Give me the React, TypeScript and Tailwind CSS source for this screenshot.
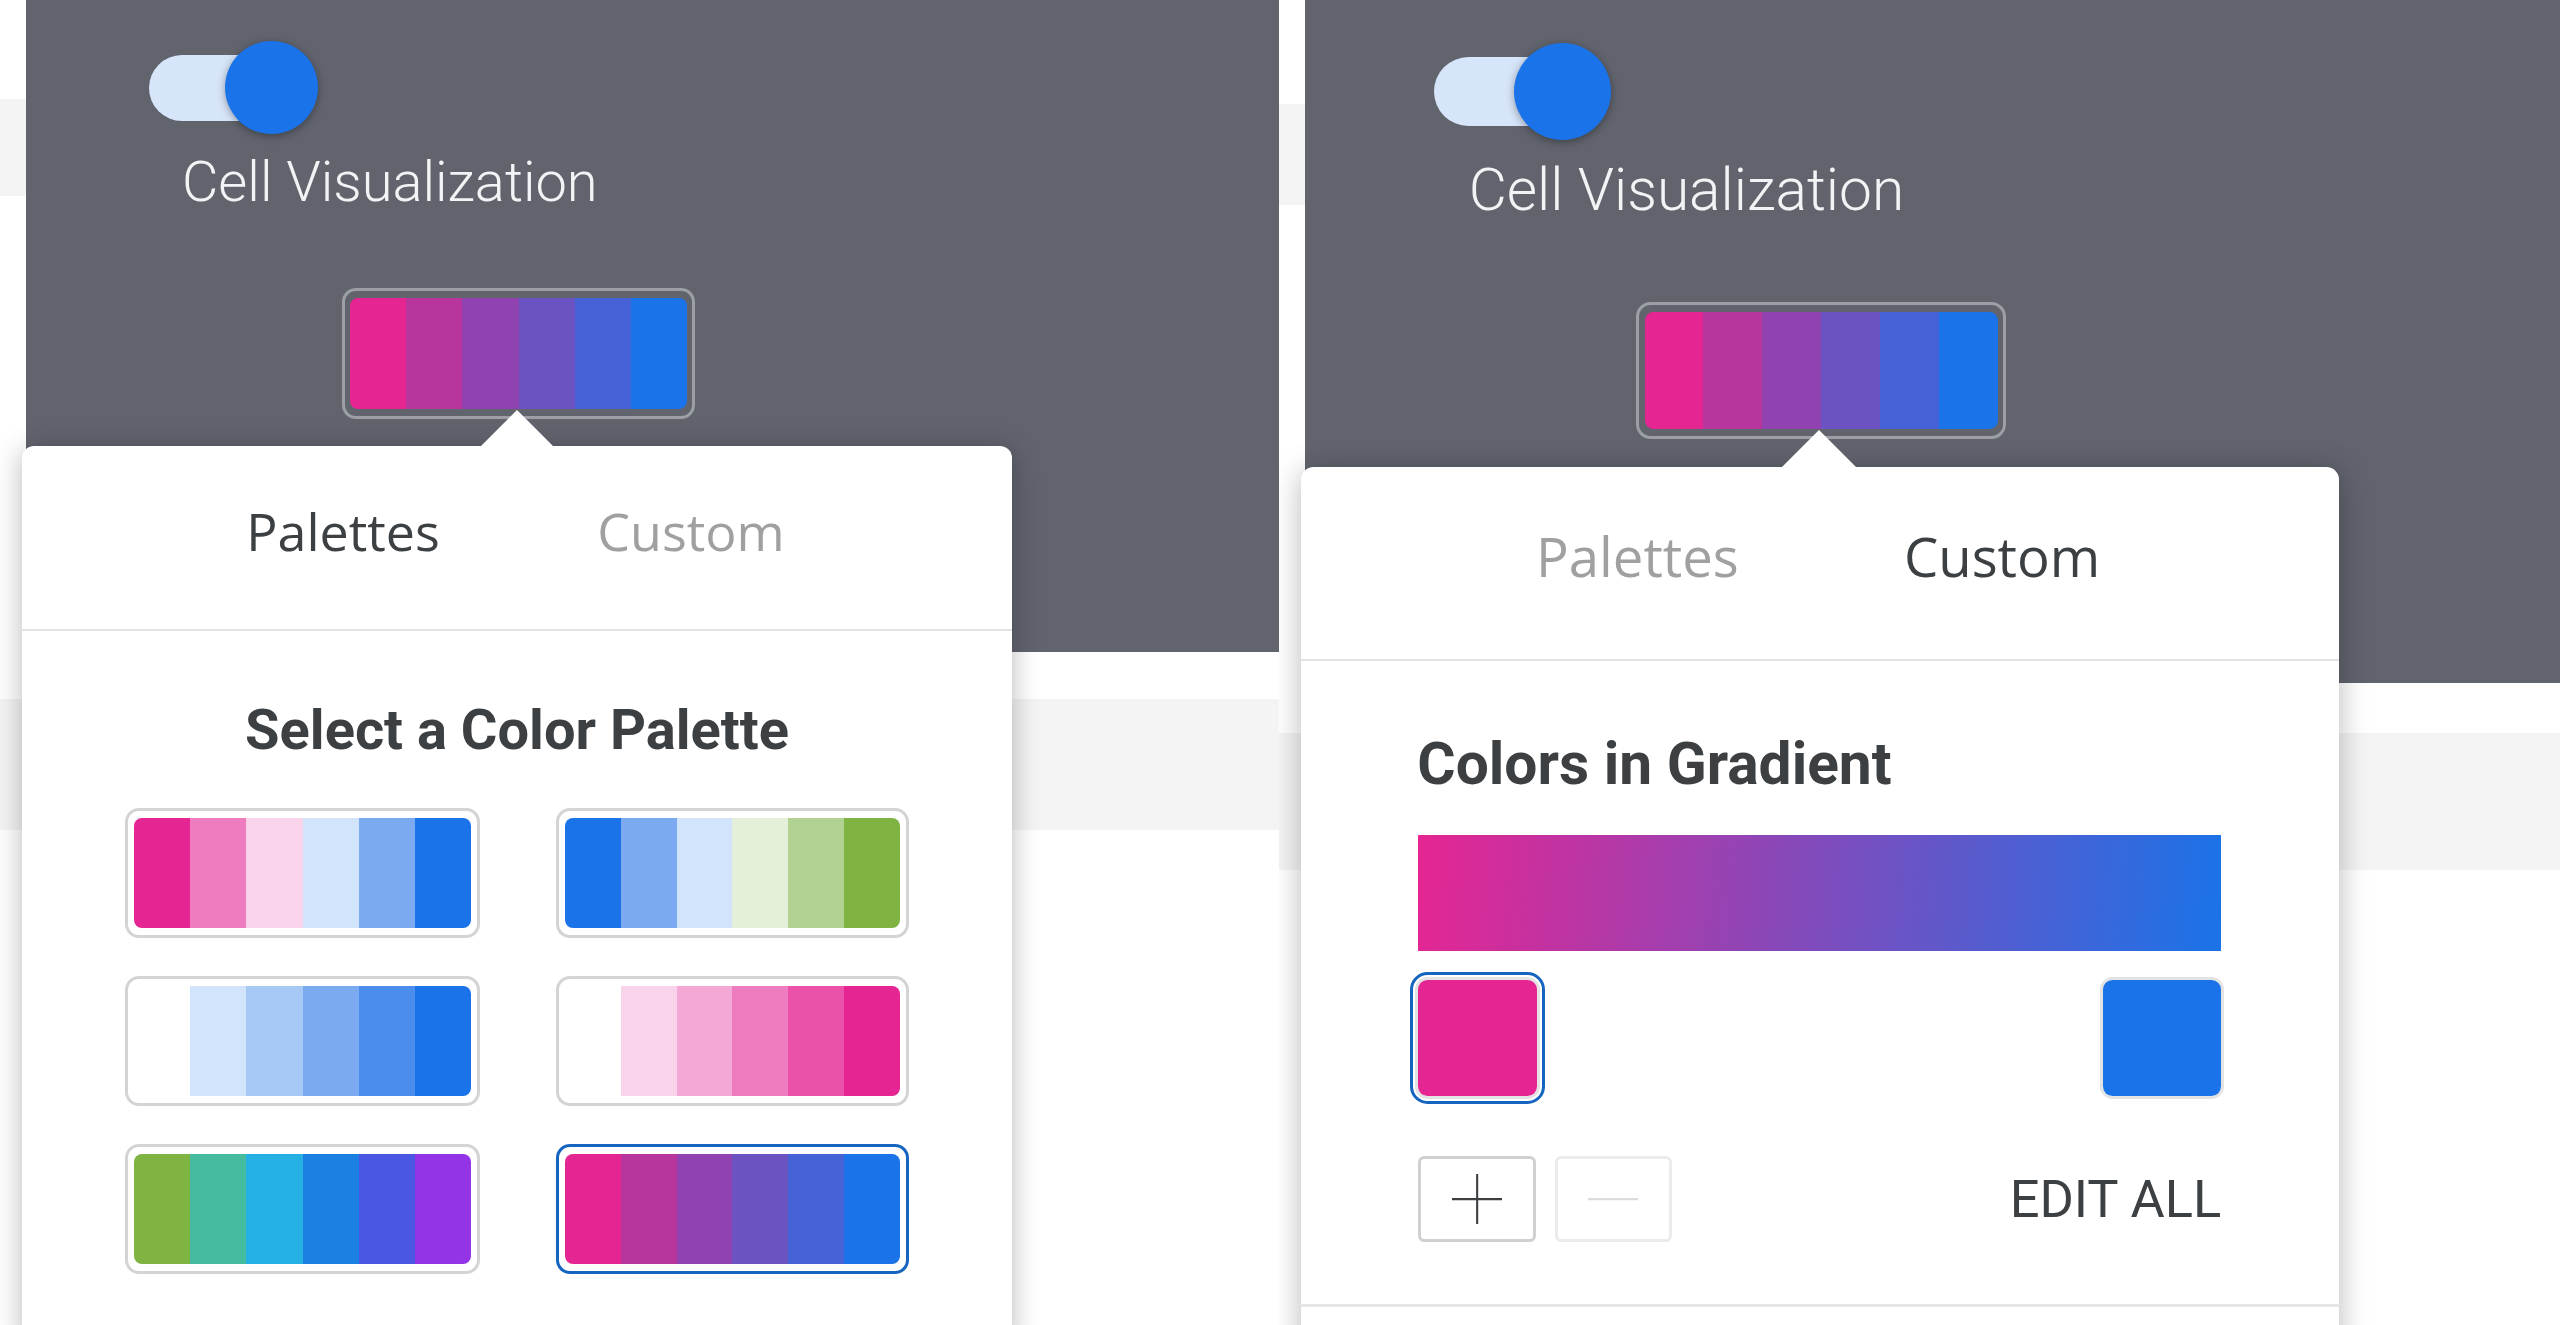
import React from "react";

type Tab = "palettes" | "custom";

const SELECTED = ["bg-[#e52592]", "bg-[#b8359e]", "bg-[#9043b0]", "bg-[#6b53c2]", "bg-[#4563d7]", "bg-[#1a73e8]"];

const PALETTES = [
  ["bg-[#e52592]", "bg-[#f07cc0]", "bg-[#f8d3ea]", "bg-[#d2e3fc]", "bg-[#7baaf0]", "bg-[#1a73e8]"],
  ["bg-[#1a73e8]", "bg-[#7baaf0]", "bg-[#d2e3fc]", "bg-[#e4f0da]", "bg-[#b2d293]", "bg-[#7fb342]"],
  ["bg-white", "bg-[#d2e3fc]", "bg-[#a6c8f5]", "bg-[#7baaf0]", "bg-[#4a8ded]", "bg-[#1a73e8]"],
  ["bg-white", "bg-[#f8d3ea]", "bg-[#f4a8d6]", "bg-[#f07cc0]", "bg-[#e952a8]", "bg-[#e52592]"],
  ["bg-[#7fb342]", "bg-[#45bba0]", "bg-[#24b0e2]", "bg-[#1c80e3]", "bg-[#4a57e3]", "bg-[#9334e6]"],
  SELECTED,
];

function Strips({ colors }: { colors: string[] }) {
  return (
    <div className="flex h-full w-full overflow-hidden rounded-[8px]">
      {colors.map((c, i) => (
        <div key={i} className={`flex-1 ${c}`} />
      ))}
    </div>
  );
}

function PaletteCell({ colors, selected }: { colors: string[]; selected?: boolean }) {
  return (
    <div
      className={`h-[130px] rounded-[14px] border-[3px] px-[6px] py-[7px] ${
        selected ? "border-[#1565c0]" : "border-[#d4d4d4]"
      }`}
    >
      <Strips colors={colors} />
    </div>
  );
}

function Swatch({ color, selected }: { color: string; selected?: boolean }) {
  return (
    <div
      className={`h-[117px] w-[119px] rounded-[12px] border-[3px] border-[#e3e3e3] ${
        selected ? "outline-[3px] outline-offset-[2px] outline-solid outline-[#1565c0]" : ""
      }`}
    >
      <div className={`h-full w-full rounded-[9px] ${color}`} />
    </div>
  );
}

function PalettesBody() {
  return (
    <div className="flex flex-col items-center">
      <div className="mt-[71px] font-[Roboto] text-[56px] font-bold leading-none text-[#3c4043]">
        Select a Color Palette
      </div>
      <div className="mt-[50px] grid grid-cols-[355px_353px] gap-x-[76px] gap-y-[38px]">
        {PALETTES.map((p, i) => (
          <PaletteCell key={i} colors={p} selected={i === 5} />
        ))}
      </div>
    </div>
  );
}

function CustomBody() {
  return (
    <div className="flex flex-col">
      <div className="flex flex-col px-[112px]">
        <div className="mt-[70px] -ml-[1px] font-[Roboto] text-[56px] font-bold leading-none text-[#3c4043]">
          Colors in Gradient
        </div>
        <div className="mt-[40px] h-[110px] bg-[linear-gradient(96deg,#e52592_0%,#1a73e8_100%)]" />
        <div className="-mx-[3px] mt-[25px] flex justify-between">
          <Swatch color="bg-[#e52592]" selected />
          <Swatch color="bg-[#1a73e8]" />
        </div>
        <div className="mt-[54px] flex items-center">
          <button className="flex h-[82px] w-[112px] items-center justify-center rounded-[6px] border-[3px] border-[#d0d0d0] bg-white">
            <svg width="48" height="48" viewBox="0 0 48 48">
              <path d="M24 0v48M0 24h48" stroke="#3c4043" strokeWidth="2" fill="none" />
            </svg>
          </button>
          <button className="ml-[18px] flex h-[82px] w-[112px] items-center justify-center rounded-[6px] border-[3px] border-[#ebebeb] bg-white">
            <svg width="48" height="48" viewBox="0 0 48 48">
              <path d="M0 24h48" stroke="#dcdcdc" strokeWidth="2" fill="none" />
            </svg>
          </button>
          <div className="ml-auto font-[Roboto] text-[50px] leading-none text-[#3c4043]">EDIT ALL</div>
        </div>
      </div>
      <div className="mt-[59px] h-[3px] bg-[#e6e6e6]" />
    </div>
  );
}

function Popover({ tab }: { tab: Tab }) {
  const on = "text-[#3c4043]";
  const off = "text-[#a0a0a0]";
  return (
    <div className="absolute -left-[4px] top-[446px] h-[900px] w-[990px] rounded-t-[12px] bg-white shadow-[0_4px_28px_rgba(0,0,0,0.28)]">
      <div className="absolute -top-[36px] left-[459px] h-0 w-0 border-x-[36px] border-b-[36px] border-x-transparent border-b-white" />
      <div className="flex h-[185px] justify-center border-b-2 border-[#e2e2e2] pt-[59px] font-['Open_Sans'] text-[52px] leading-none">
        <div className={`w-[348px] text-center ${tab === "palettes" ? on : off}`}>Palettes</div>
        <div className={`w-[348px] text-center ${tab === "custom" ? on : off}`}>Custom</div>
      </div>
      {tab === "palettes" ? <PalettesBody /> : <CustomBody />}
    </div>
  );
}

function Pane({ tab, strip }: { tab: Tab; strip: string }) {
  return (
    <div className="flex h-full w-full flex-col bg-white">
      <div className="flex h-[652px] shrink-0">
        <div className={`flex shrink-0 flex-col ${strip}`}>
          <div className="h-[99px]" />
          <div className="h-[97px] bg-[#f4f4f4]" />
        </div>
        <div className="relative flex flex-1 flex-col items-start bg-[#61646d]">
          <div className="ml-[123px] mt-[41px] flex items-center">
            <div className="h-[66px] w-[150px] rounded-full bg-[#d7e5fa]" />
            <div className="-ml-[74px] h-[93px] w-[93px] rounded-full bg-[#1a73e8] shadow-[0_2px_8px_rgba(0,0,0,0.35)]" />
          </div>
          <div className="ml-[156px] mt-[20px] font-[Roboto] text-[56px] font-light leading-none text-[#f1f3f4]">
            Cell Visualization
          </div>
          <div className="ml-[316px] mt-[78px] h-[131px] w-[353px] rounded-[14px] border-[3px] border-[#9c9fa6] px-[5px] py-[7px]">
            <Strips colors={SELECTED} />
          </div>
          <Popover tab={tab} />
        </div>
      </div>
      <div className="h-[47px] shrink-0" />
      <div className="h-[131px] shrink-0 bg-[#f4f4f4]" />
    </div>
  );
}

export default function App() {
  return (
    <div className="flex h-[1325px] w-[2560px] overflow-hidden bg-white">
      <div className="h-[1325px] w-[1279px] shrink-0 overflow-hidden">
        <Pane tab="palettes" strip="w-[26px]" />
      </div>
      <div className="h-[1325px] w-[1281px] shrink-0 overflow-hidden">
        <div className="h-[1265px] w-[1223px] [zoom:1.048]">
          <Pane tab="custom" strip="w-[25px]" />
        </div>
      </div>
    </div>
  );
}
